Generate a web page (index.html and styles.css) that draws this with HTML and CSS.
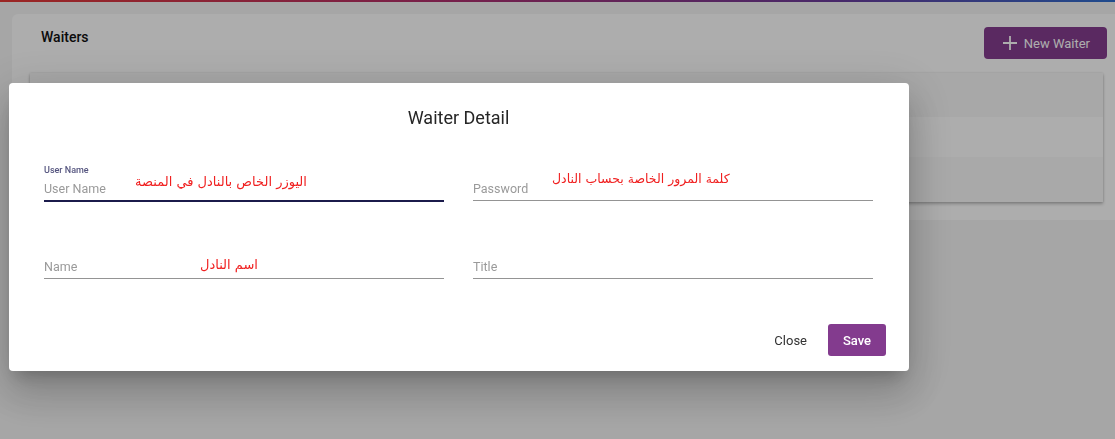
FILE: index.html
```html
<!DOCTYPE html>
<html lang="en">
<head>
<meta charset="utf-8">
<title>Waiters</title>
<link rel="stylesheet" href="styles.css">
</head>
<body>
<div class="stripe"></div>
<main class="page">
  <section class="card">
    <header class="card-head">
      <h1 class="card-title">Waiters</h1>
      <button class="btn-new" type="button">
        <svg class="plus" viewBox="0 0 16 16" width="16" height="16" aria-hidden="true"><path d="M8 1v14M1 8h14" stroke="currentColor" stroke-width="1.8" fill="none"/></svg>
        <span>New Waiter</span>
      </button>
    </header>
    <div class="table">
      <div class="t-row t-head"></div>
      <div class="t-row"></div>
      <div class="t-row t-alt"></div>
    </div>
  </section>
</main>

<div class="backdrop"></div>

<div class="dialog" role="dialog">
  <h2 class="dialog-title">Waiter Detail</h2>
  <div class="form-grid">
    <div class="field focused">
      <span class="float-label">User Name</span>
      <div class="input">User Name</div>
      <span class="note note-user" dir="rtl">اليوزر الخاص بالنادل في المنصة</span>
    </div>
    <div class="field">
      <div class="input">Password</div>
      <span class="note note-pass" dir="rtl">كلمة المرور الخاصة بحساب النادل</span>
    </div>
    <div class="field">
      <div class="input">Name</div>
      <span class="note note-name" dir="rtl">اسم النادل</span>
    </div>
    <div class="field">
      <div class="input">Title</div>
    </div>
  </div>
  <div class="actions">
    <button class="btn-close" type="button">Close</button>
    <button class="btn-save" type="button">Save</button>
  </div>
</div>
</body>
</html>
```

FILE: styles.css
```css
* { box-sizing: border-box; }

html, body {
  margin: 0;
  padding: 0;
  height: 100%;
  overflow: hidden;
}

body {
  background: #f5f5f5;
  font-family: Roboto, "Liberation Sans", Arial, sans-serif;
  color: #212121;
}

.stripe {
  height: 2px;
  background: linear-gradient(90deg, #e53935 0%, #b0306e 40%, #6a3c9c 75%, #2f6fd0 100%);
}

.page {
  padding: 12px 0 0 12px;
}

.card {
  background: #ffffff;
  border-radius: 6px 0 0 6px;
  padding: 13px 12px 18px 18px;
}

.card-head {
  display: flex;
  justify-content: space-between;
  align-items: flex-start;
  margin-right: -4px;
}

.card-title {
  margin: 0;
  padding: 0 0 0 11px;
  font-size: 14px;
  font-weight: 500;
  line-height: 20px;
  color: #111;
}

.btn-new {
  display: flex;
  align-items: center;
  flex-shrink: 0;
  gap: 6px;
  height: 32px;
  padding: 0 17px 0 18px;
  white-space: nowrap;
  border: 0;
  border-radius: 4px;
  background: #853d90;
  color: #ffffff;
  font-family: inherit;
  font-size: 13px;
  font-weight: 400;
}

.plus { display: block; }

.table {
  margin-top: 14px;
  background: #ffffff;
  box-shadow: 0 2px 3px rgba(0,0,0,.25), 0 0 2px rgba(0,0,0,.12);
}

.t-row { height: 40px; }
.t-head { height: 44px; background: #f8f8f8; }
.t-alt { height: 45px; background: #fafafa; }

.backdrop {
  position: fixed;
  inset: 0;
  background: rgba(0,0,0,.32);
}

.dialog {
  position: fixed;
  left: 9px;
  top: 83px;
  width: 900px;
  height: 288px;
  background: #ffffff;
  border-radius: 4px;
  padding: 23px 23px 15px 35px;
  box-shadow: 0 11px 15px -7px rgba(0,0,0,.2), 0 24px 38px 3px rgba(0,0,0,.14), 0 9px 46px 8px rgba(0,0,0,.12);
}

.dialog-title {
  margin: 0 13px 0 0;
  text-align: center;
  font-size: 18px;
  font-weight: 400;
  line-height: 24px;
  color: #262626;
}

.form-grid {
  display: grid;
  grid-template-columns: 400px 400px;
  column-gap: 29px;
  row-gap: 39px;
  margin-top: 32px;
}

.field {
  position: relative;
  padding-top: 14px;
  border-bottom: 1px solid #949494;
}

.field.focused {
  border-bottom-color: #1b1b4b;
  box-shadow: 0 1px 0 #1b1b4b;
}

.float-label {
  position: absolute;
  left: 0;
  top: 2px;
  font-size: 9px;
  line-height: 12px;
  font-weight: 500;
  color: #55557f;
}

.input {
  height: 24px;
  line-height: 25px;
  font-size: 12.5px;
  color: #9a9a9a;
}

.note {
  position: absolute;
  font-family: "DejaVu Sans", sans-serif;
  font-size: 13px;
  line-height: 20px;
  color: #f02020;
  white-space: nowrap;
}

.note-user { left: 91px; top: 10px; }
.note-pass { left: 79px; top: 7px; font-size: 12.5px; }
.note-name { left: 156px; top: 15px; }

.actions {
  display: flex;
  justify-content: flex-end;
  align-items: center;
  margin-top: 45px;
}

.btn-close {
  height: 32px;
  padding: 0 16px;
  margin-right: 5px;
  border: 0;
  background: transparent;
  font-family: inherit;
  font-size: 13px;
  color: #333;
}

.btn-save {
  height: 32px;
  width: 58px;
  border: 0;
  border-radius: 3px;
  background: #833b8e;
  color: #ffffff;
  font-family: inherit;
  font-size: 13px;
  font-weight: 500;
}
```
